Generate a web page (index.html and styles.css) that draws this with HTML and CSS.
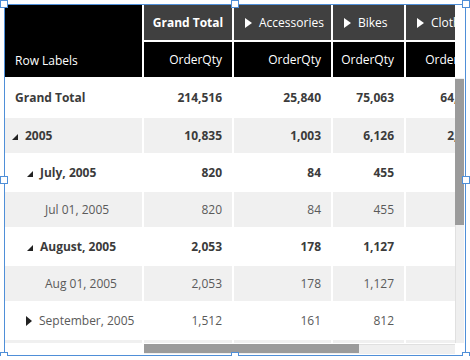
FILE: index.html
```html
<!DOCTYPE html>
<html>
<head>
<meta charset="utf-8">
<link rel="stylesheet" href="styles.css">
</head>
<body>
<div class="frame">
  <div class="main">
    <div class="table-wrap">
      <div class="pivot">
        <div class="cell hd hd-labels">Row Labels</div>
        <div class="cell hd hd-col center bold">Grand Total</div>
        <div class="cell hd hd-col"><svg class="tri-r" width="7" height="10" viewBox="0 0 7 10"><polygon points="0,0 7,5 0,10" fill="#fff"/></svg>Accessories</div>
        <div class="cell hd hd-col"><svg class="tri-r" width="7" height="10" viewBox="0 0 7 10"><polygon points="0,0 7,5 0,10" fill="#fff"/></svg>Bikes</div>
        <div class="cell hd hd-col"><svg class="tri-r" width="7" height="10" viewBox="0 0 7 10"><polygon points="0,0 7,5 0,10" fill="#fff"/></svg>Clothing</div>
        <div class="cell hd num">OrderQty</div>
        <div class="cell hd num">OrderQty</div>
        <div class="cell hd num">OrderQty</div>
        <div class="cell hd num">OrderQty</div>

        <div class="row bold">
          <div class="cell lbl lv-top">Grand Total</div>
          <div class="cell num">214,516</div>
          <div class="cell num">25,840</div>
          <div class="cell num">75,063</div>
          <div class="cell num">64,497</div>
        </div>
        <div class="row band bold">
          <div class="cell lbl lv0"><svg class="tri-x" width="6" height="6" viewBox="0 0 6 6"><polygon points="6,0 6,6 0,6" fill="#222"/></svg>2005</div>
          <div class="cell num">10,835</div>
          <div class="cell num">1,003</div>
          <div class="cell num">6,126</div>
          <div class="cell num">2,573</div>
        </div>
        <div class="row bold">
          <div class="cell lbl lv1"><svg class="tri-x" width="6" height="6" viewBox="0 0 6 6"><polygon points="6,0 6,6 0,6" fill="#222"/></svg>July, 2005</div>
          <div class="cell num">820</div>
          <div class="cell num">84</div>
          <div class="cell num">455</div>
          <div class="cell num"></div>
        </div>
        <div class="row band detail">
          <div class="cell lbl lv2">Jul 01, 2005</div>
          <div class="cell num">820</div>
          <div class="cell num">84</div>
          <div class="cell num">455</div>
          <div class="cell num"></div>
        </div>
        <div class="row bold">
          <div class="cell lbl lv1"><svg class="tri-x" width="6" height="6" viewBox="0 0 6 6"><polygon points="6,0 6,6 0,6" fill="#222"/></svg>August, 2005</div>
          <div class="cell num">2,053</div>
          <div class="cell num">178</div>
          <div class="cell num">1,127</div>
          <div class="cell num"></div>
        </div>
        <div class="row band detail">
          <div class="cell lbl lv2">Aug 01, 2005</div>
          <div class="cell num">2,053</div>
          <div class="cell num">178</div>
          <div class="cell num">1,127</div>
          <div class="cell num"></div>
        </div>
        <div class="row detail">
          <div class="cell lbl lv1c"><svg class="tri-c" width="6" height="10" viewBox="0 0 6 10"><polygon points="0,0 6,5 0,10" fill="#222"/></svg>September, 2005</div>
          <div class="cell num">1,512</div>
          <div class="cell num">161</div>
          <div class="cell num">812</div>
          <div class="cell num"></div>
        </div>
        <div class="row band detail">
          <div class="cell lbl lv1"></div>
          <div class="cell num"></div>
          <div class="cell num"></div>
          <div class="cell num"></div>
          <div class="cell num"></div>
        </div>
      </div>
    </div>
    <div class="vscroll">
      <div class="vspacer"></div>
      <div class="vtrack"><div class="vthumb"></div></div>
    </div>
  </div>
  <div class="hbar">
    <div class="hspacer"></div>
    <div class="htrack"><div class="hthumb"></div></div>
    <div class="corner"></div>
  </div>
  <span class="handle h-tl"></span>
  <span class="handle h-tm"></span>
  <span class="handle h-tr"></span>
  <span class="handle h-ml"></span>
  <span class="handle h-mr"></span>
  <span class="handle h-bl"></span>
  <span class="handle h-bm"></span>
  <span class="handle h-br"></span>
</div>
</body>
</html>
```

FILE: styles.css
```css
html, body {
  margin: 0;
  padding: 0;
  background: #fff;
}
body {
  font-family: "Open Sans", "Noto Sans", sans-serif;
  font-size: 12px;
  color: #3b3b3b;
}
.frame {
  position: relative;
  margin: 4px 0 0 4px;
  width: 460px;
  height: 350px;
  border: 1px solid #4f8fd8;
  display: flex;
  flex-direction: column;
}
.main {
  display: flex;
  height: 338px;
}
.table-wrap {
  width: 450px;
  height: 338px;
  overflow: hidden;
}
.pivot {
  display: grid;
  grid-template-columns: 137px 88px 97px 71px 82px;
  grid-template-rows: 35px 35px 37px;
  grid-auto-rows: 35px;
  gap: 2px;
  background: #fff;
  width: 483px;
}
.row { display: contents; }
.cell {
  display: flex;
  align-items: center;
  white-space: nowrap;
  overflow: hidden;
}
.band > .cell { background: #f0f0f0; }
.bold { font-weight: 700; }
.detail { color: #5a5a5a; }
.hd {
  background: #000;
  color: #fff;
}
.hd-labels {
  grid-row: 1 / 3;
  padding-left: 10px;
  align-items: flex-end;
  padding-bottom: 8px;
  box-sizing: border-box;
}
.hd-col {
  background: #404040;
  padding-left: 11px;
  gap: 7px;
}
.hd-col.center { justify-content: center; padding-left: 0; }
.num {
  justify-content: flex-end;
  padding-right: 10px;
}
.lbl { gap: 7px; }
.lv-top { padding-left: 10px; }
.lv0 { padding-left: 7px; }
.lv1 { padding-left: 22px; }
.lv1c { padding-left: 21px; }
.lv2 { padding-left: 40px; }
.tri-x { margin-top: 3px; flex: none; }
.tri-c { flex: none; }
.tri-r { flex: none; }
.vscroll {
  width: 10px;
  display: flex;
  flex-direction: column;
}
.vspacer { height: 73px; }
.vtrack {
  flex: 1;
  background: #efefef;
  border-left: 1px solid #e0e0e0;
  box-sizing: border-box;
  margin-right: 1px;
}
.vthumb {
  height: 146px;
  margin-top: 1px;
  margin-left: -1px;
  background: #9b9b9b;
}
.hbar {
  display: flex;
  height: 12px;
}
.hspacer { width: 139px; }
.htrack {
  width: 311px;
  margin-top: 1px;
  height: 10px;
  background: #efefef;
  border-top: 1px solid #e0e0e0;
  box-sizing: border-box;
}
.hthumb {
  width: 215px;
  height: 9px;
  margin-top: -1px;
  background: #9b9b9b;
}
.corner { width: 10px; }
.handle {
  position: absolute;
  width: 6px;
  height: 6px;
  background: #fff;
  border: 1px solid #4f8fd8;
}
.h-tl { left: -5px; top: -5px; }
.h-tm { left: 226px; top: -5px; }
.h-tr { right: -5px; top: -5px; }
.h-ml { left: -5px; top: 171px; }
.h-mr { right: -5px; top: 171px; }
.h-bl { left: -5px; bottom: -5px; }
.h-bm { left: 226px; bottom: -5px; }
.h-br { right: -5px; bottom: -5px; }
```
